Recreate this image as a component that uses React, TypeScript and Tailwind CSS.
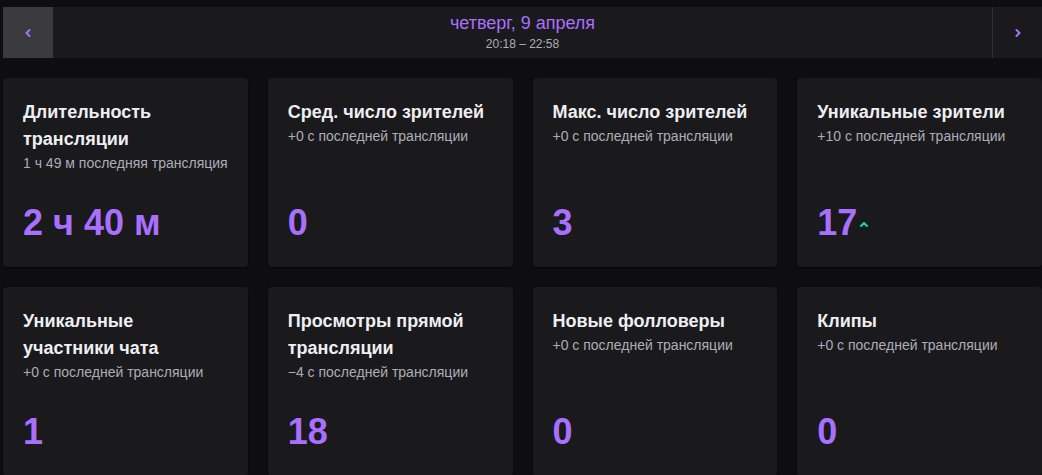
import React from "react";

type Card = { title: string; sub: string; value: string; up?: boolean };

const cards: Card[] = [
  { title: "Длительность трансляции", sub: "1 ч 49 м последняя трансляция", value: "2 ч 40 м" },
  { title: "Сред. число зрителей", sub: "+0 с последней трансляции", value: "0" },
  { title: "Макс. число зрителей", sub: "+0 с последней трансляции", value: "3" },
  { title: "Уникальные зрители", sub: "+10 с последней трансляции", value: "17", up: true },
  { title: "Уникальные участники чата", sub: "+0 с последней трансляции", value: "1" },
  { title: "Просмотры прямой трансляции", sub: "−4 с последней трансляции", value: "18" },
  { title: "Новые фолловеры", sub: "+0 с последней трансляции", value: "0" },
  { title: "Клипы", sub: "+0 с последней трансляции", value: "0" },
];

function Chevron({ dir }: { dir: "left" | "right" }) {
  return (
    <svg width="8" height="10" viewBox="0 0 8 10" fill="none">
      {dir === "left" ? (
        <path d="M5.5 2 L2.5 5 L5.5 8" stroke="#a970ff" strokeWidth="2" strokeLinecap="round" strokeLinejoin="round" />
      ) : (
        <path d="M2.5 2 L5.5 5 L2.5 8" stroke="#a970ff" strokeWidth="2" strokeLinecap="round" strokeLinejoin="round" />
      )}
    </svg>
  );
}

export default function App() {
  return (
    <div
      className="min-h-screen w-full bg-[#0e0e10] pt-[7px] pl-[3px] overflow-hidden"
      style={{ fontFamily: '"Liberation Sans", Arial, sans-serif' }}
    >
      <div className="flex h-[51px] w-full bg-[#1a1a1d]">
        <button className="flex w-[50px] items-center justify-center bg-[#3b3b3e]">
          <Chevron dir="left" />
        </button>
        <div className="flex flex-1 flex-col items-center justify-center gap-[5px]">
          <div className="text-[18px] leading-[18px] text-[#a970ff]">четверг, 9 апреля</div>
          <div className="text-[12px] leading-[14px] text-[#adadb8]">20:18 – 22:58</div>
        </div>
        <button className="flex w-[50px] items-center justify-center border-l border-[#323236]">
          <Chevron dir="right" />
        </button>
      </div>

      <div className="mt-5 grid grid-cols-4 gap-5">
        {cards.map((c, i) => (
          <div
            key={i}
            className="flex h-[189px] flex-col justify-between rounded bg-[#1a1a1d] px-5 pt-[21px] pb-[22px] shadow-[0_1px_2px_rgba(0,0,0,0.6)]"
          >
            <div>
              <div className="text-[18px] font-bold leading-[27px] text-[#efeff1]">{c.title}</div>
              <div className="mt-[1px] text-[14px] leading-[18px] text-[#adadb8]">{c.sub}</div>
            </div>
            <div className="flex items-center">
              <span className="text-[36px] font-bold leading-[44px] text-[#a970ff]">{c.value}</span>
              {c.up && (
                <svg className="ml-[2px] mt-[2px]" width="10" height="6" viewBox="0 0 10 6" fill="none">
                  <path d="M2 5 L5 2 L8 5" stroke="#00dbb0" strokeWidth="2" strokeLinecap="round" strokeLinejoin="round" />
                </svg>
              )}
            </div>
          </div>
        ))}
      </div>
    </div>
  );
}
